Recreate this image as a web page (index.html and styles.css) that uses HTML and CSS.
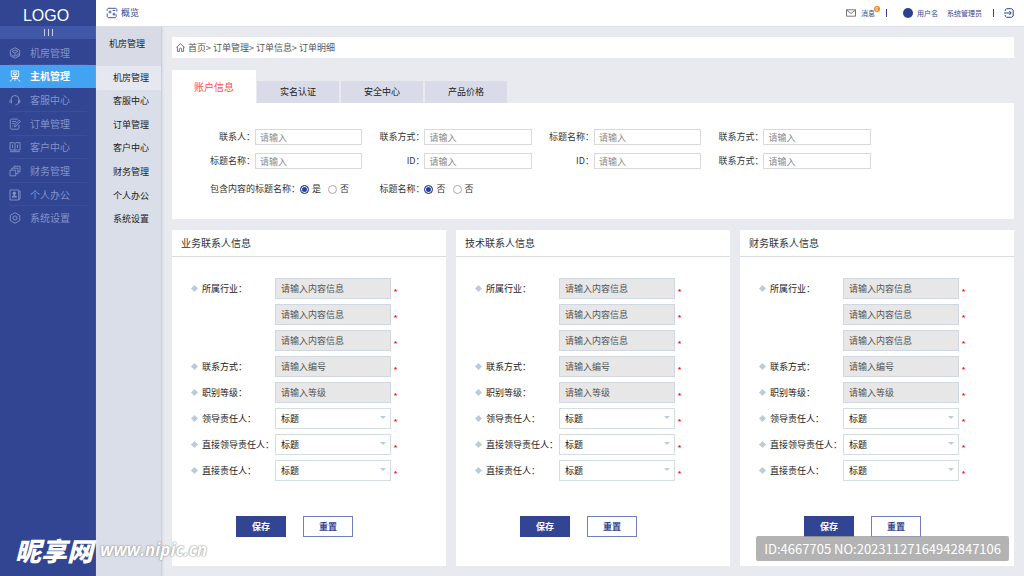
FILE: index.html
```html
<!DOCTYPE html>
<html lang="zh-CN">
<head>
<meta charset="utf-8">
<meta name="viewport" content="width=device-width, initial-scale=1">
<title>订单明细</title>
<link rel="stylesheet" href="styles.css">
</head>
<body>
<div class="app">
  <aside class="sidebar">
    <div class="logo">LOGO</div>
    <button class="collapse" type="button" aria-label="收起菜单"><span class="bar"></span><span class="bar"></span><span class="bar"></span></button>
    <nav class="menu">
      <a class="menu-item" href="#"><svg class="icon" viewBox="0 0 12 12"><path d="M6 .7l4.700 2.600v5.400L6 11.300 1.300 8.700V3.300zM3 4.300L6 3l3 1.300-3 1.900zM1.500 6.500c1 1.800 2.500 2.700 4.500 2.700M6 6.200v3M6.500 9.200L9.500 6.200M8 9.500l2.500-2.500"/></svg>机房管理</a>
      <a class="menu-item active" href="#"><svg class="icon" viewBox="0 0 12 12"><path d="M2.300 1h7.400v5.500H2.300zM4.300 2.800h3.400v1.800H4.300zM6 4.600v6.200M3.800 6.500C3.800 9 2.800 10.500.8 11.300M8.200 6.500c0 2.500 1 4 3 4.800M3.500 8.500h5"/></svg>主机管理</a>
      <a class="menu-item" href="#"><svg class="icon" viewBox="0 0 12 12"><path d="M2 6.200V5.500a4 4 0 0 1 8 0v2c0 2-1.500 3.300-3.700 3.500M2.500 6v3H1.700C.7 8.500.6 6.600 1.500 6zM9.500 6v3h.8c1-.5 1.100-2.400.2-3z"/></svg>客服中心</a>
      <a class="menu-item" href="#"><svg class="icon" viewBox="0 0 12 12"><path d="M10 7v3.300l-1 .9H2.200l-.9-.9V1.900l.9-.8h7M3.200 3.500h4M3.200 5.500h2.500M3.200 8h1M5.500 8.800l.4-1.900 4.200-4.700 1.300 1.200-4.200 4.700z"/></svg>订单管理</a>
      <a class="menu-item" href="#"><svg class="icon" viewBox="0 0 12 12"><path d="M1 1.700h4.300l.7.700.7-.7H11v7.300H6.700l-.7.700-.7-.7H1zM6 2.400v7.300M3.500 3.700v3.200M8.500 3.700v3.200M1 10.700h10"/></svg>客户中心</a>
      <a class="menu-item" href="#"><svg class="icon" viewBox="0 0 12 12"><path d="M1 5.200h5.700v5.600H1zM2.800 5.200V3.200H9v5.600H6.700M5 3.200V1.200h6v5.500H9"/></svg>财务管理</a>
      <a class="menu-item" href="#"><svg class="icon" viewBox="0 0 12 12"><path d="M1 1h8.700v10H1zM9.700 2h1.400v8H9.700"/><circle class="solid" cx="5.300" cy="4.200" r="1.600"/><path class="solid" d="M4.700 5h1.200v1.500l1.800.7v1.300H2.900V7.200l1.800-.7z"/></svg>个人办公</a>
      <a class="menu-item" href="#"><svg class="icon" viewBox="0 0 12 12"><path d="M6 .7l4.700 2.600v5.400L6 11.300 1.300 8.700V3.300z"/><circle cx="6" cy="6" r="2"/></svg>系统设置</a>
    </nav>
  </aside>

  <div class="workspace">
    <header class="topbar">
      <a class="overview" href="#"><svg class="icon" viewBox="0 0 12 12"><path d="M10.800 4.500V2.300l-1-1H2.200l-1 1v1.500M1.200 6.500v3.200l1 1h7l1-1V7.500M2.500 5h3M4 3.500v3M6.500 7.200h3M8 5.700v3M6.700 3.500h2.500"/></svg>概览</a>
      <div class="account">
        <a class="message" href="#"><svg class="mail-icon" viewBox="0 0 10 8"><path d="M.5.800h9v6.400h-9zM.5 1L5 4.500 9.500 1"/></svg><span class="message-text">消息<span class="badge">6</span></span></a>
        <span class="divider"></span>
        <span class="user"><span class="avatar"></span>用户名</span>
        <span class="role">系统管理员</span>
        <span class="divider"></span>
        <button class="exit" type="button" aria-label="退出"><svg class="exit-icon" viewBox="0 0 10 10"><path d="M1.200 3V2L2.500.700h5L9.200 2v6L7.500 9.300h-5L1.200 8V7M0 5h7M5.300 3L7.300 5l-2 2"/></svg></button>
      </div>
    </header>

    <div class="body">
      <nav class="submenu">
        <h2 class="submenu-title">机房管理</h2>
        <div class="submenu-list">
          <a class="submenu-item active" href="#">机房管理</a>
          <a class="submenu-item" href="#">客服中心</a>
          <a class="submenu-item" href="#">订单管理</a>
          <a class="submenu-item" href="#">客户中心</a>
          <a class="submenu-item" href="#">财务管理</a>
          <a class="submenu-item" href="#">个人办公</a>
          <a class="submenu-item" href="#">系统设置</a>
        </div>
      </nav>

      <main class="content">
        <nav class="breadcrumb" aria-label="面包屑"><svg class="home-icon" viewBox="0 0 9 9"><path d="M.5 4.300L4.500.700l4 3.600M1.400 3.700v4.700h2V6.200c0-1.500 2.200-1.500 2.200 0v2.200h2V3.700"/></svg><a href="#">首页</a>&gt; <a href="#">订单管理</a>&gt; <a href="#">订单信息</a>&gt; <a href="#">订单明细</a></nav>

        <div class="tabs">
          <button class="tab active" type="button">账户信息</button>
          <button class="tab" type="button">实名认证</button>
          <button class="tab" type="button">安全中心</button>
          <button class="tab" type="button">产品价格</button>
        </div>

        <form class="filters">
          <div class="filter"><label class="filter-label" for="f1">联系人：</label><input class="filter-input" id="f1" type="text" placeholder="请输入"></div>
          <div class="filter"><label class="filter-label" for="f2">联系方式：</label><input class="filter-input" id="f2" type="text" placeholder="请输入"></div>
          <div class="filter"><label class="filter-label" for="f3">标题名称：</label><input class="filter-input" id="f3" type="text" placeholder="请输入"></div>
          <div class="filter"><label class="filter-label" for="f4">联系方式：</label><input class="filter-input" id="f4" type="text" placeholder="请输入"></div>
          <div class="filter"><label class="filter-label" for="f5">标题名称：</label><input class="filter-input" id="f5" type="text" placeholder="请输入"></div>
          <div class="filter"><label class="filter-label" for="f6">ID：</label><input class="filter-input" id="f6" type="text" placeholder="请输入"></div>
          <div class="filter"><label class="filter-label" for="f7">ID：</label><input class="filter-input" id="f7" type="text" placeholder="请输入"></div>
          <div class="filter"><label class="filter-label" for="f8">联系方式：</label><input class="filter-input" id="f8" type="text" placeholder="请输入"></div>
          <div class="choices" role="radiogroup" aria-labelledby="c1"><span id="c1">包含内容的标题名称：</span><label class="choice"><input class="radio" type="radio" name="include" checked>是</label><label class="choice"><input class="radio" type="radio" name="include">否</label></div>
          <div class="choices" role="radiogroup" aria-labelledby="c2"><span id="c2">标题名称：</span><label class="choice"><input class="radio" type="radio" name="title" checked>否</label><label class="choice"><input class="radio" type="radio" name="title">否</label></div>
        </form>

        <div class="cards">
          <form class="card">
            <h3 class="card-title">业务联系人信息</h3>
            <div class="fields">
              <div class="field"><label class="field-label" for="a1">所属行业：</label><input class="field-input" id="a1" type="text" placeholder="请输入内容信息"><span class="required">*</span></div>
              <div class="field"><span class="field-space"></span><input class="field-input" aria-label="所属行业 2" type="text" placeholder="请输入内容信息"><span class="required">*</span></div>
              <div class="field"><span class="field-space"></span><input class="field-input" aria-label="所属行业 3" type="text" placeholder="请输入内容信息"><span class="required">*</span></div>
              <div class="field"><label class="field-label" for="a4">联系方式：</label><input class="field-input" id="a4" type="text" placeholder="请输入编号"><span class="required">*</span></div>
              <div class="field"><label class="field-label" for="a5">职别等级：</label><input class="field-input" id="a5" type="text" placeholder="请输入等级"><span class="required">*</span></div>
              <div class="field"><label class="field-label" for="a6">领导责任人：</label><span class="picker"><select class="select" id="a6"><option>标题</option></select></span><span class="required">*</span></div>
              <div class="field"><label class="field-label" for="a7">直接领导责任人：</label><span class="picker"><select class="select" id="a7"><option>标题</option></select></span><span class="required">*</span></div>
              <div class="field"><label class="field-label" for="a8">直接责任人：</label><span class="picker"><select class="select" id="a8"><option>标题</option></select></span><span class="required">*</span></div>
            </div>
            <div class="actions"><button class="btn primary" type="button">保存</button><button class="btn" type="reset">重置</button></div>
          </form>

          <form class="card">
            <h3 class="card-title">技术联系人信息</h3>
            <div class="fields">
              <div class="field"><label class="field-label" for="b1">所属行业：</label><input class="field-input" id="b1" type="text" placeholder="请输入内容信息"><span class="required">*</span></div>
              <div class="field"><span class="field-space"></span><input class="field-input" aria-label="所属行业 2" type="text" placeholder="请输入内容信息"><span class="required">*</span></div>
              <div class="field"><span class="field-space"></span><input class="field-input" aria-label="所属行业 3" type="text" placeholder="请输入内容信息"><span class="required">*</span></div>
              <div class="field"><label class="field-label" for="b4">联系方式：</label><input class="field-input" id="b4" type="text" placeholder="请输入编号"><span class="required">*</span></div>
              <div class="field"><label class="field-label" for="b5">职别等级：</label><input class="field-input" id="b5" type="text" placeholder="请输入等级"><span class="required">*</span></div>
              <div class="field"><label class="field-label" for="b6">领导责任人：</label><span class="picker"><select class="select" id="b6"><option>标题</option></select></span><span class="required">*</span></div>
              <div class="field"><label class="field-label" for="b7">直接领导责任人：</label><span class="picker"><select class="select" id="b7"><option>标题</option></select></span><span class="required">*</span></div>
              <div class="field"><label class="field-label" for="b8">直接责任人：</label><span class="picker"><select class="select" id="b8"><option>标题</option></select></span><span class="required">*</span></div>
            </div>
            <div class="actions"><button class="btn primary" type="button">保存</button><button class="btn" type="reset">重置</button></div>
          </form>

          <form class="card">
            <h3 class="card-title">财务联系人信息</h3>
            <div class="fields">
              <div class="field"><label class="field-label" for="d1">所属行业：</label><input class="field-input" id="d1" type="text" placeholder="请输入内容信息"><span class="required">*</span></div>
              <div class="field"><span class="field-space"></span><input class="field-input" aria-label="所属行业 2" type="text" placeholder="请输入内容信息"><span class="required">*</span></div>
              <div class="field"><span class="field-space"></span><input class="field-input" aria-label="所属行业 3" type="text" placeholder="请输入内容信息"><span class="required">*</span></div>
              <div class="field"><label class="field-label" for="d4">联系方式：</label><input class="field-input" id="d4" type="text" placeholder="请输入编号"><span class="required">*</span></div>
              <div class="field"><label class="field-label" for="d5">职别等级：</label><input class="field-input" id="d5" type="text" placeholder="请输入等级"><span class="required">*</span></div>
              <div class="field"><label class="field-label" for="d6">领导责任人：</label><span class="picker"><select class="select" id="d6"><option>标题</option></select></span><span class="required">*</span></div>
              <div class="field"><label class="field-label" for="d7">直接领导责任人：</label><span class="picker"><select class="select" id="d7"><option>标题</option></select></span><span class="required">*</span></div>
              <div class="field"><label class="field-label" for="d8">直接责任人：</label><span class="picker"><select class="select" id="d8"><option>标题</option></select></span><span class="required">*</span></div>
            </div>
            <div class="actions"><button class="btn primary" type="button">保存</button><button class="btn" type="reset">重置</button></div>
          </form>
        </div>
      </main>
    </div>
  </div>

  <div class="watermark"><span class="watermark-name">昵享网</span><span class="watermark-site">www.nipic.cn</span></div>
  <div class="serial">ID:4667705 NO:20231127164942847106</div>
</div>
</body>
</html>
```

FILE: styles.css
```css
* { box-sizing: border-box; }

body {
  margin: 0;
  font-family: "Noto Sans CJK SC", sans-serif;
  font-size: 9px;
  line-height: 12px;
  color: #333;
  background: #e9eaf0;
}

a { color: inherit; text-decoration: none; }
button, input, select { font: inherit; color: inherit; margin: 0; padding: 0; border: 0; border-radius: 0; }
svg { fill: none; stroke: currentColor; flex: none; }
h2, h3 { margin: 0; font-weight: 400; }

.app { position: relative; display: flex; min-height: 100vh; }

/* Sidebar */
.sidebar { flex: 0 0 96px; background: #314592; color: #8493c8; }
.logo {
  padding: 6px 0 0;
  font-family: "Liberation Sans", sans-serif;
  font-size: 16px;
  line-height: 20px;
  text-align: center;
  text-indent: -4px;
  color: #fff;
}
.collapse { display: flex; width: 100%; height: 13px; justify-content: center; align-items: center; gap: 3px; background: #4157a7; }
.bar { width: 1px; height: 7px; background: #c5cdeb; }
.menu { display: grid; grid-auto-rows: 1fr; height: 189px; margin-top: 2px; }
.menu-item { display: flex; align-items: center; gap: 9px; padding-left: 9px; font-size: 10px; background: linear-gradient(#3b4f9b, #3b4f9b) center bottom / 78px 1px no-repeat; }
.menu-item:last-child { background: none; }
.menu-item.active { background: #43a3f3; color: #fff; font-weight: 700; }
.icon { width: 12px; height: 12px; stroke-width: 0.9; }
.solid { fill: currentColor; stroke: none; }

/* Top bar */
.workspace { flex: 1; min-width: 0; display: flex; flex-direction: column; }
.topbar { display: flex; justify-content: space-between; align-items: center; height: 27px; padding: 0 10px; background: #fff; border-bottom: 1px solid #dfe1e8; color: #314592; }
.overview { display: flex; align-items: center; gap: 3px; }
.account { display: flex; align-items: center; font-size: 7px; }
.message { display: flex; align-items: center; gap: 5px; }
.mail-icon { width: 10px; height: 8px; color: #555; stroke-width: 0.8; }
.message-text { position: relative; }
.badge { position: absolute; left: 13px; top: -1px; width: 6px; height: 6px; border-radius: 50%; background: #f58220; color: #fff; font-size: 5px; line-height: 6px; text-align: center; }
.divider { width: 1px; height: 8px; margin-left: 11px; background: #314592; }
.user { display: flex; align-items: center; gap: 4px; margin-left: 16px; }
.avatar { width: 10px; height: 10px; border-radius: 50%; background: #2b4090; }
.role { margin-left: 9px; }
.exit { display: flex; margin-left: 10px; background: none; }
.exit-icon { width: 10px; height: 10px; }

/* Second-level menu */
.body { flex: 1; display: flex; }
.submenu { flex: 0 0 66px; background: #dadee9; border-right: 1px solid #cdd0dc; box-shadow: 1px 0 2px #d8dae3; }
.submenu-title { padding: 11px 0 16px 13px; font-size: 9px; line-height: 12px; background: #d8dbe6; color: #222; }
.submenu-list { display: grid; grid-auto-rows: 1fr; height: 165px; }
.submenu-item { display: flex; align-items: center; padding-left: 17px; color: #222; }
.submenu-item.active { background: #e5e7f1; }

/* Main content */
.content { flex: 1; min-width: 0; padding: 10px; }
.breadcrumb { display: flex; align-items: center; height: 21px; padding-left: 4px; background: #fff; color: #555; white-space: pre; }
.home-icon { width: 9px; height: 9px; margin-right: 3px; stroke-width: 0.8; }

.tabs { display: flex; align-items: flex-end; gap: 2px; margin-top: 12px; }
.tab { width: 82px; height: 22px; background: #d9dbe8; color: #222; }
.tab.active { width: 84px; height: 33px; margin-right: -1px; background: #fff; color: #ff4d4d; font-size: 10px; }

.filters { display: grid; grid-template-columns: repeat(4, minmax(0, 1fr)); gap: 8px 9px; padding: 26px 17% 22px 30px; background: #fff; }
.filter { display: flex; align-items: center; }
.filter-label { flex: 0 0 53px; text-align: right; }
.filter-input { flex: 1; min-width: 0; height: 16px; padding: 0 4px; border: 1px solid #d9d9d9; background: #fff; }
.filter-input::placeholder { color: #888; }
.choices { display: flex; align-items: center; height: 16px; margin-top: 4px; padding-left: 8px; white-space: nowrap; }
.choice { display: flex; align-items: center; gap: 3px; margin-right: 7px; }
.radio { appearance: none; width: 9px; height: 9px; border: 1px solid #aaa; border-radius: 50%; background: #fff; }
.radio:checked { border-color: #2b4090; background: #2341a0; box-shadow: inset 0 0 0 1px #fff; }

.cards { display: grid; grid-template-columns: repeat(3, 1fr); gap: 10px; margin-top: 11px; }
.card { padding-bottom: 29px; background: #fff; }
.card-title { padding: 7px 9px; font-size: 10px; line-height: 12px; border-bottom: 1px solid #d9dbe2; }
.fields { display: grid; gap: 5px; padding: 21px 47px 0 19px; }
.field { display: flex; align-items: center; }
.field-label, .field-space { flex: 0 0 84px; white-space: nowrap; }
.field-label { display: flex; align-items: center; gap: 4px; color: #222; }
.field-label::before { content: ""; width: 5px; height: 5px; margin: 0 1px; background: #bccbdc; transform: rotate(45deg); }
.field-input { flex: 1; min-width: 0; height: 21px; padding: 0 5px; border: 1px solid #d0d7e0; background: #e7e7e7; }
.field-input::placeholder { color: #555; }
.picker { position: relative; flex: 1; min-width: 0; display: flex; }
.picker::after { content: ""; position: absolute; right: 5px; top: 8px; border: 3px solid transparent; border-top-color: #bccbdc; border-bottom: 0; pointer-events: none; }
.select { appearance: none; width: 100%; height: 21px; padding: 0 5px; border: 1px solid #d3dde2; background: #fff; color: #111; }
.required { width: 5px; margin-left: 3px; padding-top: 7px; font-family: "Liberation Sans", sans-serif; font-size: 8px; font-weight: 700; line-height: 8px; color: #f00; }

.actions { display: flex; gap: 17px; margin-top: 35px; padding-left: 64px; }
.btn { width: 50px; height: 21px; border: 1px solid #6f7fc0; background: #fff; color: #314592; font-weight: 700; }
.btn.primary { border-color: #314592; background: #314592; color: #fff; }

/* Overlays */
.watermark { position: absolute; left: 15px; bottom: 11px; display: flex; align-items: center; gap: 7px; color: #fff; line-height: 30px; font-style: italic; pointer-events: none; }
.watermark-name { font-size: 26px; font-weight: 900; }
.watermark-site { font-family: "Open Sans", sans-serif; font-size: 17px; font-weight: 700; text-shadow: 0 0 1px #888, 0 0 2px #888; }
.serial { position: absolute; right: 15px; bottom: 15px; padding: 3px 8px; border-radius: 2px; background: rgba(160, 160, 160, 0.8); color: #fff; font-size: 13px; line-height: 19px; }
```
